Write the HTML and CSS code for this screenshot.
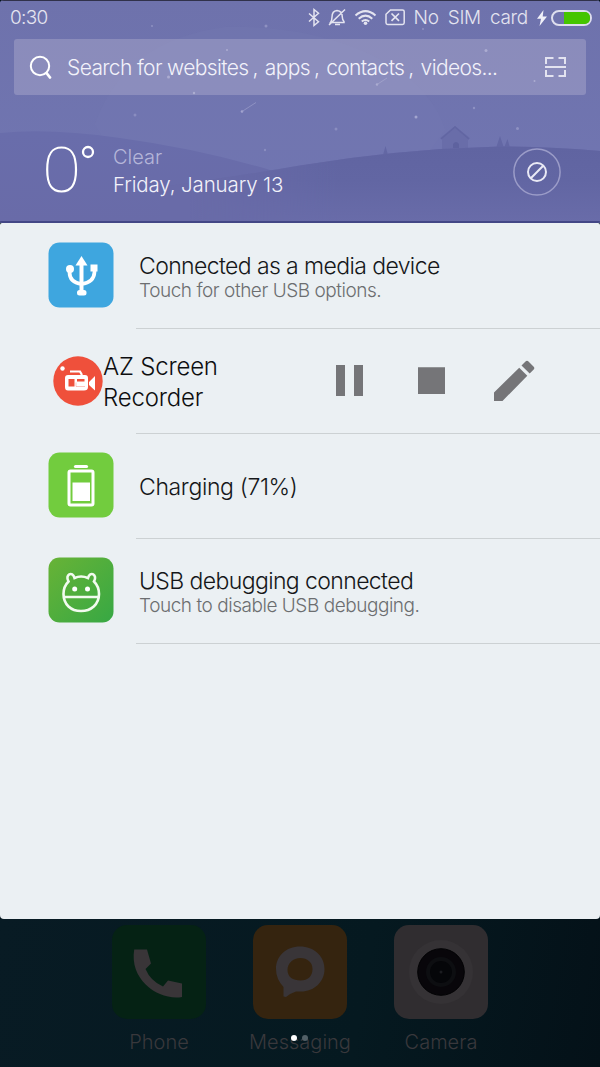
FILE: index.html
```html
<!DOCTYPE html>
<html lang="en">
<head>
<meta charset="utf-8">
<title>Notifications</title>
<link rel="stylesheet" href="styles.css">
</head>
<body>
<div class="screen">
  <header class="header">
    <svg class="scene" width="600" height="223" viewBox="0 0 600 223">
      <defs>
        <linearGradient id="sky" x1="0" y1="0" x2="0" y2="1"><stop offset="0" stop-color="#6e72ac"/><stop offset="1" stop-color="#7176b2"/></linearGradient>
        <linearGradient id="hillA" x1="0" y1="0" x2="0" y2="1"><stop offset="0" stop-color="#696dab"/><stop offset="1" stop-color="#696ba8"/></linearGradient>
        <linearGradient id="hillB" x1="0" y1="0" x2="0" y2="1"><stop offset="0" stop-color="#6064a1"/><stop offset=".45" stop-color="#6266a3"/><stop offset="1" stop-color="#696ca9"/></linearGradient>
        <linearGradient id="fade" gradientUnits="userSpaceOnUse" x1="190" y1="0" x2="340" y2="0"><stop offset="0" stop-color="#000"/><stop offset="1" stop-color="#fff"/></linearGradient>
        <mask id="soft" maskUnits="userSpaceOnUse" x="0" y="0" width="600" height="223"><rect width="600" height="223" fill="url(#fade)"/></mask>
      </defs>
      <rect width="600" height="223" fill="url(#sky)"/>
      <path d="M95 124Q125 40 225 27Q300 25 360 50Q430 80 445 130L430 150H110Z" fill="#777bb5" opacity=".2"/>
      <path d="M0 133Q50 128 120 138Q200 149 270 170L320 190V223H0Z" fill="url(#hillA)"/>
      <path d="M442 149V139L440 138L455 126L470 138L468 140V149Z" fill="#696da9"/>
      <path d="M441 139L455 127L469 139" fill="none" stroke="#6266a3" stroke-width="1.5"/>
      <path d="M453 148v-4q3-4 6 0v4" fill="#5e629f"/>
      <path d="M383 155L385.500 146L388 155ZM496 148L500 136L504 148ZM504 148L507.500 139L510 148Z" fill="#6367a4"/>
      <path d="M160 187Q240 176 300 165.500Q400 149 500 146.500Q555 147 600 151V223H160Z" fill="#696ba8"/>
      <path d="M160 187Q240 176 300 165.500Q400 149 500 146.500Q555 147 600 151V223H160Z" fill="url(#hillB)" mask="url(#soft)"/>
      <g fill="#a3a5cf"><circle cx="152" cy="26" r="1" opacity=".6"/><circle cx="266" cy="26" r="1.500" opacity=".6"/><circle cx="423" cy="29" r="1" opacity=".6"/><circle cx="135" cy="115" r="1.500" opacity=".5"/><circle cx="474" cy="108" r="1.200" opacity=".6"/><circle cx="416" cy="117" r="1.500"/><circle cx="336" cy="129" r="1.500" opacity=".5"/><circle cx="517.500" cy="128.500" r="1.500" opacity=".6"/><circle cx="265" cy="150" r="1.200" opacity=".5"/><circle cx="242" cy="111.500" r="1.300"/><circle cx="168.500" cy="77" r="1.500"/><circle cx="194" cy="93" r="1.200"/><circle cx="227" cy="50" r="1"/><circle cx="486" cy="50.500" r="1.500"/><circle cx="534.500" cy="81" r="1"/><circle cx="377" cy="84.500" r="1.200"/></g>
      <path d="M242 111.500L256 102.500M377 84.500L387 78" stroke="#9b9dca" stroke-width="1" opacity=".7"/>
      <path d="M0 222H600" stroke="#373b7b" stroke-width="1.500"/>
      <path d="M0 .5H600" stroke="#30314a" stroke-width="1"/>
    </svg>

    <div class="status">
      <span class="clock">0:30</span>
      <svg class="status-icons" width="101" height="24" viewBox="305 5 101 24" fill="none" stroke="#e4e4f0" stroke-width="1.500">
        <path d="M309 12.500L318.500 20.800L314 24.500V8.500L318.500 12.200L309 20.500"/>
        <path d="M330.500 21.500H344V20.500Q342.300 19 342.300 16Q342.300 10 337 9.500Q332 10 332 16Q332 19.500 330.500 21.500ZM335 23.500H340M329 24L345 8.500"/>
        <g stroke-width="2"><path d="M355.500 14.500Q365.500 5.800 375.500 14.500M358.700 17.700Q365.500 11.600 372.300 17.700M361.800 20.600Q365.500 17.300 369.200 20.600"/></g>
        <circle cx="365.500" cy="22.300" r="1.800" fill="#e4e4f0" stroke="none"/>
        <path d="M390.500 8.900H402.500Q404.200 8.900 404.200 10.600V21.700Q404.200 23.400 402.500 23.400H387.700Q386 23.400 386 21.700V13.200Z"/>
        <path d="M391.500 12.500L399 19.800M399 12.500L391.500 19.800" stroke-width="1.700"/>
      </svg>
      <span class="carrier">No SIM card</span>
      <svg class="bolt" width="10" height="16" viewBox="0 0 10 16"><path d="M6.500 0L0 8.700H4L2.500 16L10 6.500H5.700Z" fill="#f0f0f8"/></svg>
      <span class="battery"><span class="level"></span></span>
    </div>

    <div class="search">
      <svg class="lens" width="24" height="26" viewBox="0 0 24 26" fill="none" stroke="#fff" stroke-linecap="round"><circle cx="11" cy="12" r="9.200" stroke-width="2"/><path d="M17.500 19L21 23.500" stroke-width="2.800"/></svg>
      <span class="query">Search for websites<i>,</i>apps<i>,</i>contacts<i>,</i>videos...</span>
      <svg class="scan" width="22" height="22" viewBox="0 0 22 22" fill="none" stroke="#e3e3f0" stroke-width="2"><path d="M1 8V2H8.500M13.500 2H20V8M0 11H21M1 14V20H8.500M13.500 20H20V14"/></svg>
    </div>

    <div class="weather">
      <svg class="degrees" width="52" height="52" viewBox="44 144 52 52" fill="none" stroke="#fff"><path d="M61.500 147.500C51 147.500 47.200 155 47.200 169.500S51 191.500 61.500 191.500S76 184 76 169.500S72 147.500 61.500 147.500Z" stroke-width="2.200"/><circle cx="88" cy="152" r="5" stroke-width="2.300"/></svg>
      <div class="conditions"><span class="clear">Clear</span><span class="date">Friday, January 13</span></div>
      <svg class="dismiss" width="48" height="48" viewBox="0 0 48 48" fill="none"><circle cx="24" cy="24" r="23.100" stroke="#9b9cc8" stroke-width="1.500"/><g stroke="#e9e9f5" stroke-width="2"><circle cx="24" cy="24" r="9"/><path d="M17.800 30.200L30.200 17.800"/></g></svg>
    </div>
  </header>

  <main class="panel">
    <section class="row">
      <svg class="icon" width="66" height="66" viewBox="0 0 66 66"><rect x=".5" y=".5" width="65" height="65" rx="11" fill="#3ea6df"/><g fill="none" stroke="#fff" stroke-width="4"><path d="M33.500 21V48"/><path d="M21.500 26V30Q21.500 40.500 33.500 42Q46 40.500 46.500 30V24" stroke-width="3.700"/></g><path d="M33.500 14L39.500 23.500H27.500Z" fill="#fff"/><circle cx="22" cy="27" r="4" fill="#fff"/><rect x="42.500" y="22.500" width="7" height="7" fill="#fff"/><rect x="29" y="48" width="9.500" height="5.500" rx="2.500" fill="#fff"/></svg>
      <div class="body"><h2 class="t-media">Connected as a media device</h2><p class="p-media">Touch for other USB options.</p></div>
    </section>
    <section class="row recorder">
      <svg class="az" width="50" height="50" viewBox="0 0 50 50"><circle cx="25" cy="25" r="24.700" fill="#ef503b"/><circle cx="9.500" cy="12.500" r="2.200" fill="#fff"/><path d="M17 15.500H27L29 19" fill="none" stroke="#fff" stroke-width="2.200"/><path d="M15 19H32Q35 19 35 22V31Q35 34.500 31 34.500H15Q12 34.500 12 31V22Q12 19 15 19ZM36 26L42 20V34.500L36 29Z" fill="#fff"/><path d="M15.500 23H21.500V30.500H15.500ZM24 23H31.500V25.500H24Z" fill="#ef503b"/><path d="M23 26.500V30.500H32" stroke="#ef503b" fill="none" stroke-width=".8" opacity=".4"/></svg>
      <div class="app"><span class="az-a">AZ Screen</span><span class="az-b">Recorder</span></div>
      <svg class="controls" width="202" height="44" viewBox="335 359 202 44" fill="#757578"><path d="M336 365H345V396H336ZM354 365H363V396H354ZM418 367.300H445V394H418ZM494 392.500L519.200 367.700L527.300 375.700L502.500 401H494ZM521.500 365.500L525.500 361.500Q527 360.200 528.500 361.500L533.700 366.700Q535 368 533.700 369.500L529.700 373.500Z"/></svg>
    </section>
    <section class="row">
      <svg class="icon" width="66" height="66" viewBox="0 0 66 66"><rect x=".5" y=".5" width="65" height="65" rx="11" fill="#72cc3e"/><path d="M27.500 14.500H38.500" stroke="#fff" stroke-width="3.200" stroke-linecap="round"/><rect x="21" y="19" width="24" height="34" rx="1.500" stroke="#fff" stroke-width="3" fill="none"/><path d="M24.500 30.500H42V49H24.500Z" fill="#fff"/></svg>
      <div class="body single"><h2 class="t-charge">Charging (71%)</h2></div>
    </section>
    <section class="row">
      <svg class="icon" width="66" height="66" viewBox="0 0 66 66"><defs><linearGradient id="dbg" x1="0" y1="0" x2="1" y2="1"><stop offset="0" stop-color="#68b336"/><stop offset="1" stop-color="#37a844"/></linearGradient></defs><rect x=".5" y=".5" width="65" height="65" rx="11" fill="url(#dbg)"/><g fill="none" stroke="#f2fbef" stroke-width="2.600"><path d="M26.500 21Q33 18 40 21C42 13.500 50 17.500 46 24.500Q51 29.500 51 37C51 47.500 43 54 33 54S15.500 47.500 15.500 37Q15.500 29.500 20.500 24.500C16.500 17.500 24.500 13.500 26.500 21Z"/><path d="M15.500 40H51"/></g><circle cx="26.700" cy="32" r="2.500" fill="#fff"/><circle cx="39.500" cy="32" r="2.500" fill="#fff"/></svg>
      <div class="body"><h2 class="t-debug">USB debugging connected</h2><p class="p-debug">Touch to disable USB debugging.</p></div>
    </section>
  </main>

  <footer class="dock">
    <div class="launcher"><svg width="96" height="96" viewBox="0 0 96 96"><rect x="1" y="1" width="94" height="94" rx="15" fill="#052214"/><path d="M23.200 25.500H36L40 39.500L34.500 45Q39.500 57 52 62.500L57 56.500L71 59.500V73C49 77 18 57 23.200 25.500Z" fill="#393538"/></svg><span class="l-phone">Phone</span></div>
    <div class="launcher"><svg width="96" height="96" viewBox="0 0 96 96"><rect x="1" y="1" width="94" height="94" rx="15" fill="#35240f"/><path fill-rule="evenodd" d="M48 22.500C62 22.500 72.500 32 72.500 45S62 67.500 49 67.500H44Q39 69 34 73L31.500 72.500V63Q24 55 24 45C24 32 34 22.500 48 22.500ZM48.500 34C41 34 35.500 39 35.500 46S41 56.500 48.500 56.500S60.500 52 60.500 45S55 34 48.500 34Z" fill="#393538"/></svg><span class="l-msg">Messaging</span></div>
    <div class="launcher"><svg width="96" height="96" viewBox="0 0 96 96"><rect x="1" y="1" width="94" height="94" rx="15" fill="#302d30"/><circle cx="48" cy="48" r="32" fill="#353235"/><circle cx="48" cy="48" r="23.300" fill="#08060a" stroke="#020204"/><circle cx="48" cy="48" r="13" fill="#050609" stroke="#0d0e11" stroke-width="4"/><circle cx="48" cy="48" r="1.500" fill="#1b1c20"/></svg><span class="l-cam">Camera</span></div>
    <div class="pages"><b></b><b></b></div>
  </footer>
</div>
</body>
</html>
```
FILE: styles.css
```css
* { box-sizing: border-box; }
body { margin: 0; background: #000; font-family: Inter, "Liberation Sans", sans-serif; font-weight: 350; }
svg { display: block; flex: none; }
h2, p { margin: 0; font-weight: inherit; }
span, h2, p { white-space: nowrap; }
.screen { width: 600px; height: 1067px; display: flex; flex-direction: column; overflow: hidden; background: #04141c; }
.header { position: relative; flex: none; height: 223px; overflow: hidden; border-radius: 4px 4px 2px 2px; background: #6e72ac; color: #f2f2fa; }
.scene { position: absolute; left: 0; top: 0; }
.status, .search, .weather { position: relative; display: flex; align-items: center; }
.status { height: 35px; padding: 0 8px 0 10px; color: #e4e4f0; }
.clock { font-size: 19px; width: 296px; letter-spacing: -.7px; }
.carrier { margin-left: 8px; width: 115px; font-size: 19px; word-spacing: 4px; letter-spacing: -.3px; }
.bolt { margin-left: 9px; }
.battery { margin-left: 4px; width: 41px; height: 16px; border: 2px solid #dedeee; border-radius: 8px; padding: 0 0 0 11px; display: flex; }
.level { width: 26px; background: #45c500; border-radius: 0 5px 5px 0; }
.search { margin: 4px 14px 0; height: 56px; padding: 0 19px 0 15px; border-radius: 3px; background: rgba(189, 186, 214, .36); }
.query { margin-left: 14px; width: 478px; font-size: 21px; letter-spacing: -.63px; }
.query i { font-style: normal; margin: 0 7px 0 4px; }
.weather { margin-top: 25px; padding: 0 39px 0 44px; height: 100px; }
.weather .conditions { margin-left: 17px; padding-top: 1px; display: flex; flex-direction: column; font-size: 20px; line-height: 27px; }
.clear { color: #b5b6d9; }
.date { font-size: 20.5px; letter-spacing: -.13px; }
.dismiss { margin-left: auto; margin-top: 4px; }
.panel { flex: none; height: 696px; padding-top: 1px; border-radius: 2px 2px 4px 4px; background: #ebf0f3; color: #151719; }
.row { height: 105px; padding-left: 48px; display: flex; align-items: center; background: linear-gradient(#ccd1d3, #ccd1d3) 136px 104px / 464px 1px no-repeat; }
.icon { margin-bottom: 3px; }
.az, .controls { margin-bottom: 2px; }
.body { margin-left: 25px; padding-top: 3px; }
.body.single { padding-top: 1px; }
.body h2 { font-size: 23px; line-height: 25px; letter-spacing: -.6px; }
.body .t-charge { letter-spacing: -.35px; }
.body p { font-size: 19px; line-height: 24px; color: #6c6e70; letter-spacing: -.46px; }
.recorder { padding-left: 53px; }
.app { width: 232px; display: flex; flex-direction: column; font-size: 24px; line-height: 31px; letter-spacing: -.2px; color: #0d0e0f; }
.dock { position: relative; height: 148px; padding: 5px 111px 0; display: flex; justify-content: space-between; background: linear-gradient(100deg, #081b24, #051920 60%, #041118); color: #39383c; }
.launcher { width: 96px; display: flex; flex-direction: column; align-items: center; font-size: 20px; }
.launcher span { margin-top: 9px; line-height: 26px; }
.pages { position: absolute; left: 291px; top: 116px; display: flex; gap: 5px; }
.pages b { width: 6px; height: 6px; border-radius: 50%; background: #fff; }
.pages b + b { background: #526067; }
```
